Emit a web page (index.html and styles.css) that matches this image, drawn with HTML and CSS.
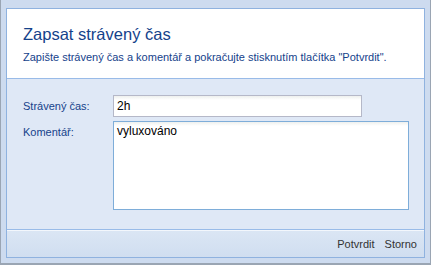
FILE: index.html
```html
<!DOCTYPE html>
<html lang="cs">
<head>
    <meta charset="UTF-8">
    <title>Zapsat strávený čas</title>
    <link rel="stylesheet" href="styles.css">
</head>
<body>
    <div class="window">
        <div class="panel">
            <!-- hlavička -->
            <div class="head">
                <h1 class="title">Zapsat strávený čas</h1>
                <div class="subtitle">Zapište strávený čas a komentář a pokračujte stisknutím tlačítka "Potvrdit".</div>
            </div>
            <!-- formulář -->
            <div class="form">
                <div class="row">
                    <label class="label">Strávený čas:</label>
                    <input type="text" class="field" value="2h">
                </div>
                <div class="row">
                    <label class="label">Komentář:</label>
                    <textarea class="area">vyluxováno</textarea>
                </div>
            </div>
            <!-- tlačítka -->
            <div class="foot">
                <span class="btn">Potvrdit</span>
                <span class="btn">Storno</span>
            </div>
        </div>
    </div>
</body>
</html>
```

FILE: styles.css
```css
* {
    box-sizing: border-box;
}
html, body {
    margin: 0;
    padding: 0;
}
body {
    font-family: 'Liberation Sans', 'DejaVu Sans', sans-serif;
    background: #cfdbec;
}
.window {
    width: 431px;
    height: 265px;
    background: #cddbef;
    border-left: 1px solid #9aa5b3;
    border-right: 1px solid #9aa5b3;
    border-bottom: 2px solid #9aa5b3;
    padding: 8px 5px 5px 5px;
}
.panel {
    width: 419px;
    height: 250px;
    border: 1px solid #8fb2df;
    display: flex;
    flex-direction: column;
    background: #dfe8f6;
}
.head {
    background: #fff;
    border-bottom: 1px solid #99bbe8;
    height: 70px;
    padding: 14px 16px 0 16px;
}
.title {
    margin: 0;
    font-weight: normal;
    font-size: 16.5px;
    color: #15428b;
    line-height: 22px;
}
.subtitle {
    margin-top: 6px;
    font-size: 11px;
    color: #15428b;
}
.form {
    flex: 1;
    padding: 16px 14px 0 16px;
    display: flex;
    flex-direction: column;
    gap: 4px;
}
.row {
    display: flex;
    align-items: flex-start;
}
.label {
    width: 90px;
    font-size: 11px;
    color: #15428b;
    padding-top: 5px;
}
.field {
    width: 249px;
    height: 22px;
    border: 1px solid #b5b8c8;
    background: linear-gradient(#eef0ee, #fff 4px);
    font: 12px 'Liberation Sans', sans-serif;
    padding: 2px 3px;
    outline: none;
}
.area {
    width: 296px;
    height: 89px;
    border: 1px solid #7eadd9;
    background: linear-gradient(#eef0ee, #fff 4px);
    font: 12px 'Liberation Sans', sans-serif;
    padding: 2px 3px;
    resize: none;
    outline: none;
}
.foot {
    height: 28px;
    border-top: 1px solid #99bbe8;
    box-shadow: inset 0 1px 0 #f3f7fc;
    background: linear-gradient(#dbe6f4, #d0def0);
    display: flex;
    justify-content: flex-end;
    align-items: center;
    gap: 10px;
    padding: 1px 7px 0 0;
}
.btn {
    font-size: 11px;
    color: #333;
}
```
